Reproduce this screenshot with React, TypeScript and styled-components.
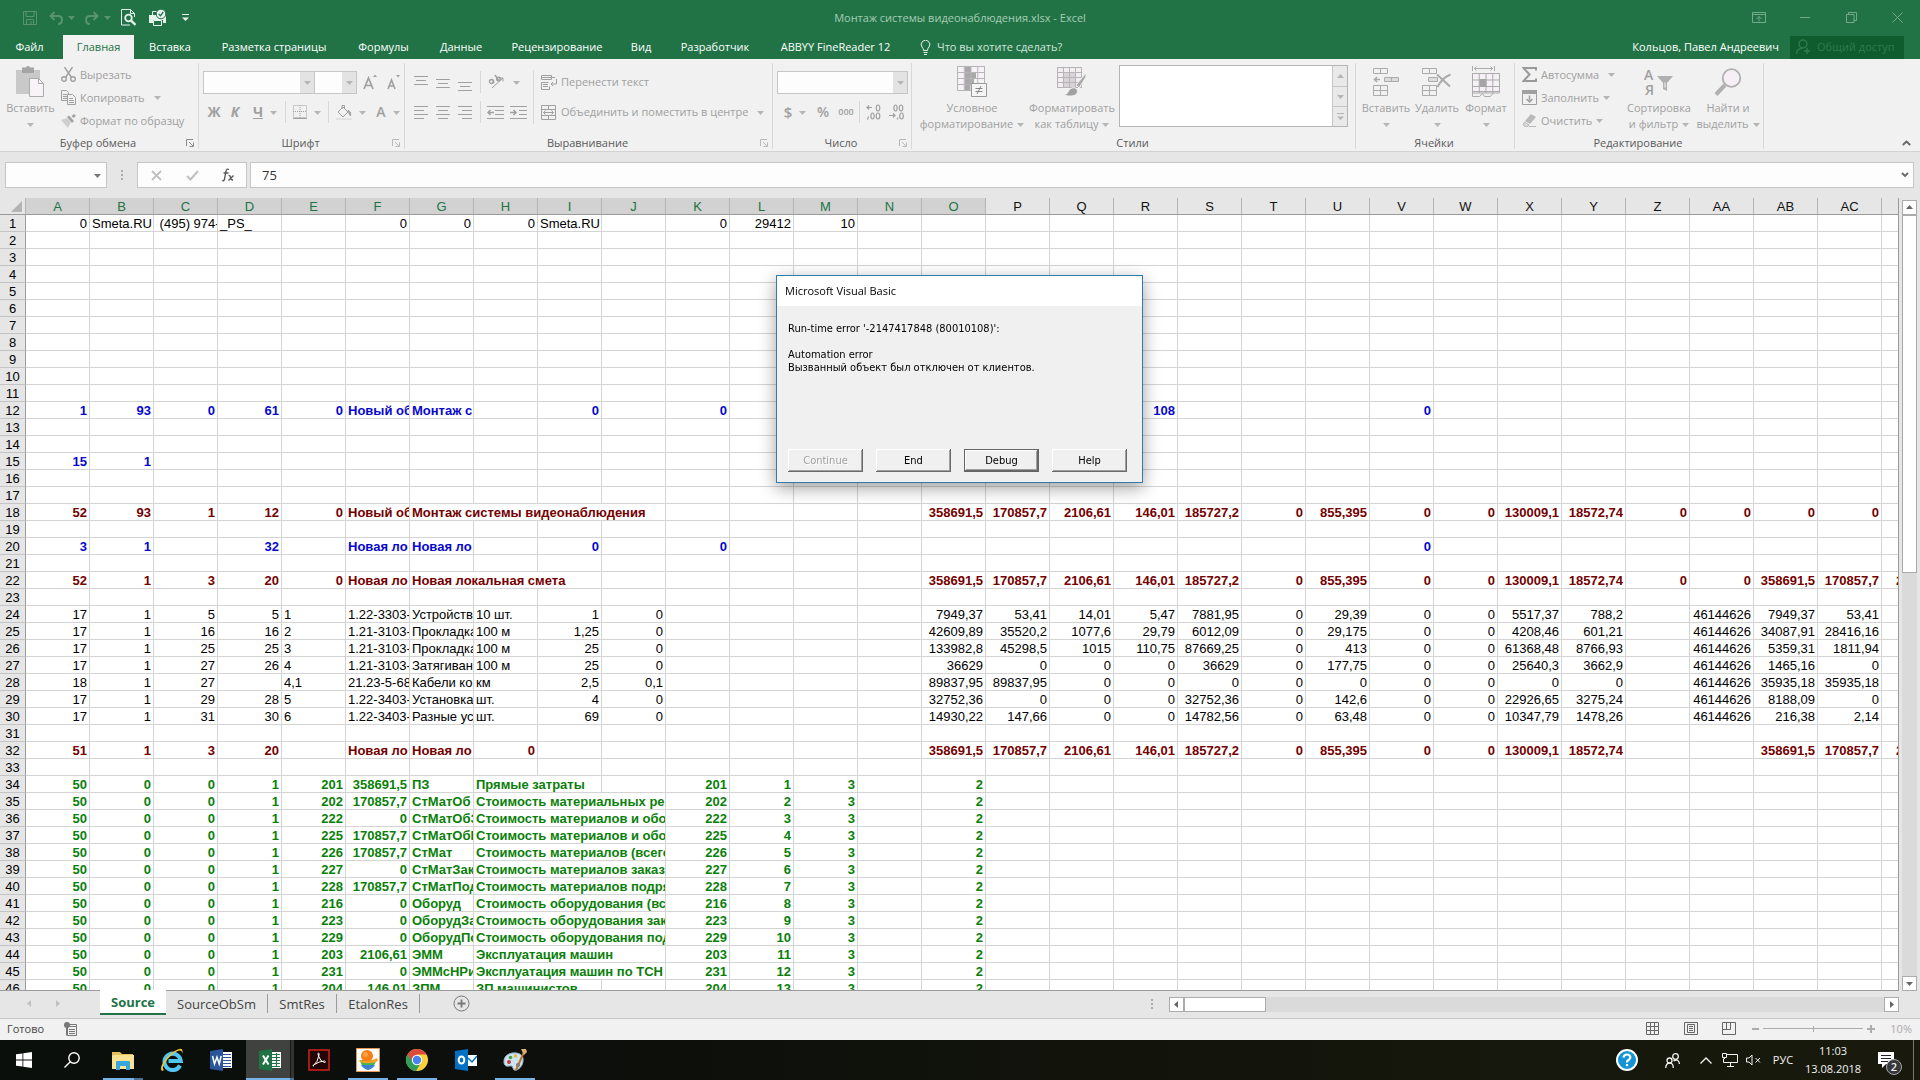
import React from "react";
import styled, { createGlobalStyle, css } from "styled-components";

const UI = `"Open Sans", "Noto Sans", sans-serif`;
const CELL = `"Liberation Sans", Arial, sans-serif`;
const DLG = `"DejaVu Sans Condensed", "DejaVu Sans", sans-serif`;
const GREEN = "#217346";
const OFF = "#a0a0a0";

const Global = createGlobalStyle`
  * { box-sizing: border-box; }
  body { margin: 0; overflow: hidden; background: #e6e6e6; }
  button, input, select { font: inherit; color: inherit; margin: 0; padding: 0; border: 0; background: none; border-radius: 0; outline: 0; }
  svg { display: block; flex: none; }
`;

const Window = styled.div`
  height: 100vh;
  display: flex;
  flex-direction: column;
  font: 11px/16px ${UI};
  color: #444;
  white-space: nowrap;
  overflow: hidden;
`;

/* ---------- title bar ---------- */
const TitleBar = styled.header`
  height: 35px;
  flex: none;
  display: grid;
  grid-template-columns: 1fr auto 1fr;
  align-items: center;
  background: ${GREEN};
`;
const QuickBar = styled.div`
  display: flex;
  align-items: center;
  padding-left: 18px;
`;
const QuickButton = styled.button<{ $w: number }>`
  width: ${(p) => p.$w}px;
  height: 28px;
  display: flex;
  align-items: center;
  justify-content: center;
  gap: 5px;
`;
const DocTitle = styled.h1`
  margin: 0;
  font: 11px/16px ${UI};
  color: #a6cdb5;
`;
const WindowButtons = styled.div`
  display: flex;
  justify-content: flex-end;
  height: 30px;
`;
const WindowButton = styled.button`
  width: 46px;
  display: flex;
  align-items: center;
  justify-content: center;
`;

/* ---------- ribbon tabs ---------- */
const TabBar = styled.nav`
  height: 24px;
  flex: none;
  display: flex;
  background: ${GREEN};
  color: #fff;
`;
const Tab = styled.button<{ $w: number; $active?: boolean; $file?: boolean }>`
  width: ${(p) => p.$w}px;
  ${(p) => p.$file && css`margin-right: 4px;`}
  text-align: center;
  ${(p) => p.$active && css`background: #f1f1f1; color: ${GREEN};`}
`;
const TellMe = styled.button`
  display: flex;
  align-items: center;
  gap: 6px;
  padding-left: 14px;
  color: #d3e5da;
`;
const Account = styled.div`
  margin-left: auto;
  padding-right: 16px;
  display: flex;
  align-items: center;
  gap: 11px;
`;
const Share = styled.button`
  width: 114px;
  height: 23px;
  padding: 0 6px;
  display: flex;
  align-items: center;
  gap: 6px;
  background: #0f5c2f;
  color: #2d7c4d;
`;

/* ---------- ribbon ---------- */
const Ribbon = styled.section`
  height: 93px;
  flex: none;
  display: flex;
  background: #f1f1f1;
  border-bottom: 1px solid #d2d2d2;
  color: ${OFF};
`;
const Group = styled.div<{ $w: number }>`
  width: ${(p) => p.$w}px;
  flex: none;
  margin: 4px 0 2px;
  border-right: 1px solid #d8d8d8;
  display: flex;
  flex-direction: column;
`;
const GroupBody = styled.div<{ $pad?: number }>`
  height: 74px;
  flex: none;
  display: flex;
  align-items: flex-start;
  padding-left: ${(p) => p.$pad ?? 0}px;
`;
const GroupFooter = styled.div`
  height: 12px;
  line-height: 12px;
  padding-right: 2px;
  display: grid;
  grid-template-columns: 10px 1fr 10px;
  align-items: center;
  text-align: center;
  color: #5a5a5a;
`;
const BigButton = styled.button<{ $w: number }>`
  width: ${(p) => p.$w}px;
  flex: none;
  display: flex;
  flex-direction: column;
  align-items: center;
  line-height: 16px;
`;
const BigIcon = styled.span`
  height: 37px;
  display: flex;
  align-items: center;
`;
const BigLine = styled.span`
  height: 16px;
  display: flex;
  align-items: center;
  gap: 4px;
`;
const Stack = styled.div<{ $w?: number }>`
  width: ${(p) => (p.$w ? p.$w + "px" : "auto")};
  height: 69px;
  display: grid;
  grid-template-rows: repeat(3, 23px);
`;
const Small = styled.button`
  display: flex;
  align-items: center;
  gap: 4px;
`;
const Far = styled.span`
  padding-left: 5px;
`;
const Rows = styled.div`
  display: grid;
  grid-template-rows: 24px 24px;
  row-gap: 6px;
  padding-top: 7px;
  align-content: start;
`;
const ToolRow = styled.div`
  display: flex;
  align-items: center;
`;
const Tool = styled.button<{ $w: number }>`
  width: ${(p) => p.$w}px;
  flex: none;
  height: 24px;
  display: flex;
  align-items: center;
  justify-content: center;
  gap: 7px;
`;
const Space = styled.span<{ $w: number }>`
  width: ${(p) => p.$w}px;
  flex: none;
`;
const Glyph = styled.span<{ $size?: number; $italic?: boolean; $line?: boolean; $bold?: boolean }>`
  font: ${(p) => (p.$italic ? "italic" : "normal")} ${(p) => (p.$bold ? 700 : 600)} ${(p) => p.$size ?? 14}px/20px ${UI};
  text-decoration: ${(p) => (p.$line ? "underline" : "none")};
`;
const Sep = styled.span<{ $tall?: boolean }>`
  width: 1px;
  flex: none;
  height: ${(p) => (p.$tall ? 54 : 22)}px;
  background: #d8d8d8;
`;
const TallSep = styled(Sep)`
  margin-top: 7px;
`;
const Combo = styled.span<{ $w: number }>`
  width: ${(p) => p.$w}px;
  height: 23px;
  display: flex;
  background: #fdfdfd;
  border: 1px solid #c6c6c6;
  & + & { margin-left: -1px; }
  select { flex: 1; min-width: 0; appearance: none; }
`;
const ComboArrow = styled.span`
  width: 14px;
  display: flex;
  align-items: center;
  justify-content: center;
  background: #e3e3e3;
`;
const Gallery = styled.div`
  width: 229px;
  height: 62px;
  margin: 2px 0 0 3px;
  display: flex;
  border: 1px solid #b4b4b4;
  background: #fff;
`;
const GalleryBar = styled.div`
  margin-left: auto;
  width: 15px;
  display: grid;
  grid-template-rows: repeat(3, 20px);
  background: #e9e9e9;
  border-left: 1px solid #c6c6c6;
  button { display: flex; align-items: center; justify-content: center; }
  button + button { border-top: 1px solid #c6c6c6; }
`;
const Collapse = styled.button`
  margin-left: auto;
  width: 28px;
  height: 24px;
  align-self: flex-end;
  padding-top: 4px;
  display: flex;
  justify-content: center;
`;

/* ---------- formula bar ---------- */
const FormulaBar = styled.section`
  height: 46px;
  flex: none;
  padding: 10px 6px 10px 5px;
  display: flex;
  background: #e6e6e6;
`;
const Box = styled.div<{ $w?: number }>`
  ${(p) => (p.$w ? css`width: ${p.$w}px;` : css`flex: 1;`)}
  display: flex;
  align-items: center;
  background: #fdfdfd;
  border: 1px solid #c6c6c6;
  input { flex: 1; min-width: 0; height: 22px; padding-left: 11px; font-size: 13px; color: #333; }
  button { width: 36px; height: 22px; display: flex; align-items: center; justify-content: center; }
`;
const Handle = styled.span`
  width: 30px;
  display: flex;
  align-items: center;
  justify-content: center;
`;
const BoxEnd = styled.button`
  && { width: 17px; }
`;

/* ---------- sheet ---------- */
const SheetArea = styled.main`
  flex: 1;
  min-height: 0;
  display: flex;
  background: #e6e6e6;
`;
const SheetView = styled.div`
  flex: 1;
  min-width: 0;
  overflow: hidden;
  border-right: 1px solid #9b9b9b;
  border-bottom: 1px solid #9b9b9b;
  background: #fff;
`;
const Table = styled.table`
  width: 1946px;
  table-layout: fixed;
  border-collapse: separate;
  border-spacing: 0;
  font: 13px/14px ${CELL};
  color: #000;
`;
const HeadCell = styled.th<{ $sel?: boolean }>`
  height: 17px;
  padding: 1px 0 0;
  font-weight: 400;
  border-right: 1px solid #b4b4b4;
  border-bottom: 1px solid #9b9b9b;
  background: ${(p) => (p.$sel ? "#d2d2d2" : "#e6e6e6")};
  color: ${(p) => (p.$sel ? GREEN : "#111")};
`;
const CornerMark = styled.span`
  display: flex;
  justify-content: flex-end;
  padding-right: 3px;
`;
const RowHead = styled.th`
  height: 17px;
  padding: 2px 0 0;
  font-weight: 400;
  text-align: center;
  background: #e6e6e6;
  border-right: 1px solid #9b9b9b;
  border-bottom: 1px solid #c4c4c4;
`;
const tones = { k: "#000", b: "#0808cf", r: "#740000", g: "#0a7f0a" } as const;
type Tone = keyof typeof tones;
const Cell = styled.td<{ $tone: Tone; $num?: boolean }>`
  height: 17px;
  padding: 2px 2px 0;
  overflow: hidden;
  white-space: pre;
  border-right: 1px solid #d4d4d4;
  border-bottom: 1px solid #d4d4d4;
  text-align: ${(p) => (p.$num ? "right" : "left")};
  color: ${(p) => tones[p.$tone]};
  font-weight: ${(p) => (p.$tone === "k" ? 400 : 700)};
`;
const VScroll = styled.div`
  width: 21px;
  padding: 2px 3px 0;
  display: flex;
  flex-direction: column;
`;
const ScrollButton = styled.button`
  width: 15px;
  height: 15px;
  flex: none;
  display: flex;
  align-items: center;
  justify-content: center;
  background: #fff;
  border: 1px solid #ababab;
`;
const Track = styled.div<{ $row?: boolean }>`
  flex: 1;
  display: flex;
  flex-direction: ${(p) => (p.$row ? "row" : "column")};
  background: #dadada;
`;
const Thumb = styled.div<{ $row?: boolean }>`
  ${(p) => (p.$row ? css`width: 82px;` : css`height: 47%;`)}
  background: #fff;
  border: 1px solid #ababab;
`;

const SheetBar = styled.section`
  height: 27px;
  flex: none;
  display: flex;
  background: #e6e6e6;
`;
const SheetNav = styled.div`
  width: 100px;
  padding: 0 15px;
  display: flex;
  button { width: 28px; height: 25px; display: flex; align-items: center; justify-content: center; }
`;
const SheetTab = styled.button<{ $w: number; $active?: boolean }>`
  width: ${(p) => p.$w}px;
  font-size: 13px;
  line-height: 18px;
  height: 19px;
  margin-top: 3px;
  border-right: 1px solid #9b9b9b;
  ${(p) =>
    p.$active &&
    css`
      height: 25px;
      margin-top: -1px;
      background: #fff;
      color: ${GREEN};
      font-weight: 700;
      border-right: 0;
      border-bottom: 2px solid ${GREEN};
    `}
`;
const AddSheet = styled.button`
  width: 82px;
  height: 25px;
  display: flex;
  align-items: center;
  justify-content: center;
`;
const HScroll = styled.div`
  width: 764px;
  height: 15px;
  margin: 6px 21px 0 auto;
  display: flex;
`;
const HGrip = styled.span`
  width: 34px;
  display: flex;
  align-items: center;
  justify-content: center;
`;

const StatusBar = styled.footer`
  height: 22px;
  flex: none;
  padding: 0 8px 2px 7px;
  display: flex;
  align-items: center;
  gap: 20px;
  background: #f1f1f1;
  border-top: 1px solid #c6c6c6;
`;
const ViewButtons = styled.div`
  margin-left: auto;
  display: flex;
  gap: 24px;
  button { width: 14px; }
`;
const ZoomBox = styled.label`
  display: flex;
  align-items: center;
  gap: 4px;
  color: #ababab;
  margin-left: -4px;
`;
const ZoomRange = styled.input`
  appearance: none;
  width: 100px;
  height: 12px;
  background:
    linear-gradient(#ababab, #ababab) center / 1px 6px no-repeat,
    linear-gradient(#ababab, #ababab) center / 100% 1px no-repeat;
  &::-webkit-slider-thumb { appearance: none; width: 1px; height: 6px; background: #ababab; }
`;
const ZoomValue = styled.output`
  width: 33px;
  text-align: right;
`;

/* ---------- dialog ---------- */
const Dialog = styled.div`
  position: fixed;
  left: 776px;
  top: 275px;
  width: 367px;
  height: 208px;
  display: flex;
  flex-direction: column;
  background: #f0f0f0;
  border: 1px solid #3379ac;
  box-shadow: 0 5px 16px rgba(0, 0, 0, 0.38);
  color: #000;
  font: 11px/13px ${DLG};
`;
const DialogTitle = styled.h2`
  margin: 0;
  height: 30px;
  padding-left: 8px;
  font: 11px/30px ${UI};
  background: #fff;
`;
const DialogText = styled.p`
  margin: 0;
  flex: 1;
  padding: 16px 11px 0;
  white-space: pre-line;
`;
const DialogButtons = styled.div`
  display: flex;
  gap: 13px;
  padding: 0 11px 10px;
`;
const DialogButton = styled.button<{ $primary?: boolean }>`
  width: 75px;
  height: 23px;
  background: #f0f0f0;
  box-shadow: inset -1px -1px #696969, inset 1px 1px #fff, inset -2px -2px #a0a0a0;
  ${(p) => p.$primary && css`
    border: 1px solid #646464;
  `}
  &:disabled { color: #a0a0a0; text-shadow: 1px 1px #fff; }
`;

/* ---------- taskbar ---------- */
const Taskbar = styled.footer`
  height: 40px;
  flex: none;
  display: flex;
  background: linear-gradient(90deg, #0a0f0b, #0d0f0b 35%, #14160c 70%, #191a0d);
  color: #f2f2f2;
`;
const TaskButton = styled.button<{ $run?: boolean; $active?: boolean; $split?: boolean; $gap?: number }>`
  width: 48px;
  margin-right: ${(p) => p.$gap ?? 1}px;
  display: flex;
  align-items: center;
  justify-content: center;
  ${(p) => p.$run && css`
    background: linear-gradient(#76b3e6, #76b3e6) center bottom / 40px 2px no-repeat;
  `}
  ${(p) => p.$split && css`
    background:
      linear-gradient(#76b3e6, #76b3e6) 4px bottom / 31px 2px no-repeat,
      linear-gradient(#4b7292, #4b7292) 35px bottom / 9px 2px no-repeat;
  `}
  ${(p) => p.$active && css`
    background:
      linear-gradient(#76b3e6, #76b3e6) left bottom / 44px 2px no-repeat,
      linear-gradient(#4b7292, #4b7292) right bottom / 4px 2px no-repeat,
      linear-gradient(90deg, #3f423f 44px, #151815 44px, #151815 45px, #323532 45px);
  `}
`;
const Tray = styled.div`
  margin-left: auto;
  display: flex;
  padding-right: 3px;
`;
const TrayButton = styled.button<{ $w: number }>`
  width: ${(p) => p.$w}px;
  display: flex;
  align-items: center;
  justify-content: center;
`;
const Clock = styled.time`
  width: 64px;
  padding-top: 2px;
  display: flex;
  flex-direction: column;
  align-items: center;
  line-height: 18px;
`;
const BadgeHost = styled.span`
  position: relative;
`;
const Badge = styled.span`
  position: absolute;
  left: 8px;
  top: 7px;
  width: 16px;
  height: 16px;
  border-radius: 8px;
  border: 1px solid #a8a8a8;
  background: #35373a;
  font: 600 11px/14px ${UI};
`;
const ShowDesktop = styled.button`
  width: 4px;
  margin-left: 6px;
  border-left: 1px solid #777;
`;

/* ---------- drawings ---------- */
const Ico = ({ w = 16, h = 16, s = OFF, sw = 1, children }: any) => (
  <svg width={w} height={h} viewBox={`0 0 ${w} ${h}`} fill="none" stroke={s} strokeWidth={sw} aria-hidden="true">
    {children}
  </svg>
);
const Arrow = ({ c = "#b5b5b5", dir = "down" }: { c?: string; dir?: "down" | "up" | "left" | "right" }) => {
  const d = { down: "M0 2h7L3.500 6z", up: "M0 5h7L3.500 1z", left: "M5 0v7L1 3.500z", right: "M2 0v7l4-3.500z" }[dir];
  return (
    <Ico w={7} h={7} s="none"><path d={d} fill={c} /></Ico>
  );
};
const Launch = ({ c = "#b9b9b9" }) => (
  <Ico w={8} h={8} s={c}><path d="M.5 7V.5H7M3 3l4 4M7.500 3.500v4h-4" /></Ico>
);
const Lines = ({ rows }: { rows: [number, number][] }) => (
  <Ico w={14} h={13}><path d={rows.map(([x, l], i) => `M${x} ${i * 4 + 0.5}h${l}`).join("")} /></Ico>
);
const Grid = ({ x, y, cols, rows, cw, ch }: any) => (
  <path
    d={
      Array.from({ length: cols + 1 }, (_, i) => `M${x + i * cw} ${y}v${rows * ch}`).join("") +
      Array.from({ length: rows + 1 }, (_, i) => `M${x} ${y + i * ch}h${cols * cw}`).join("")
    }
  />
);

/* ---------- sheet data ---------- */
const COLS = [..."ABCDEFGHIJKLMNOPQRSTUVWXYZ"].concat(["AA", "AB", "AC", "AD"]);
type Item = [string, string, number?];
type RowDef = { tone: Tone; cells: Item[] };

const from = (start: string, values: string): Item[] => {
  const at = COLS.indexOf(start);
  return values
    .split(" ")
    .map((v, i): Item => [COLS[at + i], v === "-" ? "" : v])
    .filter((c) => c[1] !== "");
};

const data: Record<number, RowDef> = {
  1: {
    tone: "k",
    cells: [["A", "0"], ["B", "Smeta.RU"], ["C", " (495) 974-"], ["D", "_PS_"], ...from("F", "0 0 0"), ["I", "Smeta.RU"], ...from("K", "0 29412 10")],
  },
  12: { tone: "b", cells: [...from("A", "1 93 0 61 0"), ["F", "Новый об"], ["G", "Монтаж с"], ["I", "0"], ["K", "0"], ["R", "108"], ["V", "0"]] },
  15: { tone: "b", cells: from("A", "15 1") },
  18: {
    tone: "r",
    cells: [...from("A", "52 93 1 12 0"), ["F", "Новый об"], ["G", "Монтаж системы видеонаблюдения", 4],
      ...from("O", "358691,5 170857,7 2106,61 146,01 185727,2 0 855,395 0 0 130009,1 18572,74 0 0 0 0")],
  },
  20: { tone: "b", cells: [...from("A", "3 1 - 32"), ["F", "Новая ло"], ["G", "Новая ло"], ["I", "0"], ["K", "0"], ["V", "0"]] },
  22: {
    tone: "r",
    cells: [...from("A", "52 1 3 20 0"), ["F", "Новая ло"], ["G", "Новая локальная смета", 3],
      ...from("O", "358691,5 170857,7 2106,61 146,01 185727,2 0 855,395 0 0 130009,1 18572,74 0 0 358691,5 170857,7 2106,61")],
  },
  32: {
    tone: "r",
    cells: [...from("A", "51 1 3 20"), ["F", "Новая ло"], ["G", "Новая ло"], ["H", "0"],
      ...from("O", "358691,5 170857,7 2106,61 146,01 185727,2 0 855,395 0 0 130009,1 18572,74 - - 358691,5 170857,7 2106,61")],
  },
};

const works: [string, string, string, string, string, string, string][] = [
  ["17 1 5 5", "1", "1.22-3303-", "Устройств", "10 шт.", "1 0", "7949,37 53,41 14,01 5,47 7881,95 0 29,39 0 0 5517,37 788,2 - 46144626 7949,37 53,41"],
  ["17 1 16 16", "2", "1.21-3103-", "Прокладка", "100 м", "1,25 0", "42609,89 35520,2 1077,6 29,79 6012,09 0 29,175 0 0 4208,46 601,21 - 46144626 34087,91 28416,16"],
  ["17 1 25 25", "3", "1.21-3103-", "Прокладка", "100 м", "25 0", "133982,8 45298,5 1015 110,75 87669,25 0 413 0 0 61368,48 8766,93 - 46144626 5359,31 1811,94"],
  ["17 1 27 26", "4", "1.21-3103-", "Затягиван", "100 м", "25 0", "36629 0 0 0 36629 0 177,75 0 0 25640,3 3662,9 - 46144626 1465,16 0"],
  ["18 1 27", "4,1", "21.23-5-68", "Кабели ко", "км", "2,5 0,1", "89837,95 89837,95 0 0 0 0 0 0 0 0 0 - 46144626 35935,18 35935,18"],
  ["17 1 29 28", "5", "1.22-3403-", "Установка", "шт.", "4 0", "32752,36 0 0 0 32752,36 0 142,6 0 0 22926,65 3275,24 - 46144626 8188,09 0"],
  ["17 1 31 30", "6", "1.22-3403-", "Разные ус", "шт.", "69 0", "14930,22 147,66 0 0 14782,56 0 63,48 0 0 10347,79 1478,26 - 46144626 216,38 2,14"],
];
works.forEach((w, i) => {
  data[24 + i] = {
    tone: "k",
    cells: [...from("A", w[0]), ["E", w[1]], ["F", w[2]], ["G", w[3]], ["H", w[4]], ...from("I", w[5]), ...from("O", w[6])],
  };
});

const totals: [string, string, string, string, number][] = [
  ["201", "358691,5", "ПЗ", "Прямые затраты", 2],
  ["202", "170857,7", "СтМатОб", "Стоимость материальных ре", 3],
  ["222", "0", "СтМатОбЗ", "Стоимость материалов и обо", 3],
  ["225", "170857,7", "СтМатОбП", "Стоимость материалов и обо", 3],
  ["226", "170857,7", "СтМат", "Стоимость материалов (всего", 3],
  ["227", "0", "СтМатЗак", "Стоимость материалов заказ", 3],
  ["228", "170857,7", "СтМатПод", "Стоимость материалов подря", 3],
  ["216", "0", "Оборуд", "Стоимость оборудования (вс", 3],
  ["223", "0", "ОборудЗа", "Стоимость оборудования зак", 3],
  ["229", "0", "ОборудПо", "Стоимость оборудования под", 3],
  ["203", "2106,61", "ЭММ", "Эксплуатация машин", 3],
  ["231", "0", "ЭММсНРи", "Эксплуатация машин по ТСН", 3],
  ["204", "146,01", "ЗПМ", "ЗП машинистов", 2],
];
totals.forEach((t, i) => {
  data[34 + i] = {
    tone: "g",
    cells: [...from("A", "50 0 0 1"), ["E", t[0]], ["F", t[1]], ["G", t[2]], ["H", t[3], t[4]],
      ...from("K", `${t[0]} ${i + 1} 3`), ["O", "2"]],
  };
});

const isNumber = (col: string, v: string) => /^[\d,]+$/.test(v) && !(col === "E" && !/^(0|2\d\d)$/.test(v));

const SheetRow = ({ n }: { n: number }) => {
  const def = data[n];
  const out: React.ReactNode[] = [];
  for (let c = 0; c < COLS.length; ) {
    const item = def?.cells.find((x) => x[0] === COLS[c]);
    const span = item?.[2] ?? 1;
    out.push(
      <Cell key={c} colSpan={span} $tone={def?.tone ?? "k"} $num={!!item && isNumber(COLS[c], item[1])}>
        {item?.[1]}
      </Cell>
    );
    c += span;
  }
  return (
    <tr>
      <RowHead scope="row">{n}</RowHead>
      {out}
    </tr>
  );
};

const G2 = "#58956f";
const LG = "#e7f2ec";

const RibbonTabs: [string, number][] = [
  ["Вставка", 72], ["Разметка страницы", 136], ["Формулы", 83], ["Данные", 72], ["Рецензирование", 120],
  ["Вид", 48], ["Разработчик", 100], ["ABBYY FineReader 12", 141],
];

export default function App() {
  return (
    <Window>
      <Global />
      <TitleBar>
        <QuickBar>
          <QuickButton $w={23} aria-label="Сохранить">
            <Ico w={14} h={14} s={G2}><path d="M.5.5h13v13H.5zM3 .5v5h8v-5M3.500 13.500v-5h7v5M8 10v3" /></Ico>
          </QuickButton>
          <QuickButton $w={42} aria-label="Отменить">
            <Ico w={14} h={14} s={G2} sw={2}><path d="M1.500 5H9q4 0 4 4t-4 4M5.500 1l-4 4 4 4" /></Ico>
            <Arrow c={G2} />
          </QuickButton>
          <QuickButton $w={30} aria-label="Вернуть">
            <Ico w={14} h={14} s={G2} sw={2}><path d="M12.500 5H5q-4 0-4 4t4 4M8.500 1l4 4-4 4" /></Ico>
            <Arrow c={G2} />
          </QuickButton>
          <QuickButton $w={30} aria-label="Просмотр">
            <Ico w={15} h={17} s={LG}><path d="M9.500.5h-9v15.500H9M9.500.5v4h4M9.500.5l4 4V8" /><circle cx="7.500" cy="9" r="3.300" strokeWidth="1.800" /><path d="M10 11.500l4.500 4.500" strokeWidth="2.400" /></Ico>
          </QuickButton>
          <QuickButton $w={28} aria-label="Печать">
            <Ico w={17} h={17} s="none"><path d="M0 6h17v8h-3v-3H4v3H0z" fill={LG} /><path d="M4.500 11.500h8v5h-8z" fill={GREEN} stroke={LG} /><path d="M3.500 6V2.500H8" stroke={LG} /><circle cx="12" cy="5" r="4.800" fill={LG} stroke={GREEN} /><path d="M9.800 5l1.700 1.800L14.200 3" stroke={GREEN} strokeWidth="1.300" /></Ico>
          </QuickButton>
          <QuickButton $w={28} aria-label="Настройка панели">
            <Ico w={7} h={8} s={LG}><path d="M0 .5h7" /><path d="M0 3.500h7L3.500 7z" fill={LG} stroke="none" /></Ico>
          </QuickButton>
        </QuickBar>
        <DocTitle>Монтаж системы видеонаблюдения.xlsx - Excel</DocTitle>
        <WindowButtons>
          <WindowButton aria-label="Параметры ленты"><Ico w={14} h={11} s="#74a98b"><path d="M.5.5h13v10H.5zM.5 2.500h13M7 9.500v-5M4.500 7L7 4.500 9.500 7" /></Ico></WindowButton>
          <WindowButton aria-label="Свернуть"><Ico w={10} h={11} s="#74a98b"><path d="M0 5.500h10" /></Ico></WindowButton>
          <WindowButton aria-label="Восстановить"><Ico w={11} h={11} s="#74a98b"><path d="M.5 2.500h7.500v8H.5zM2.500 2.500v-2h8v8H8" /></Ico></WindowButton>
          <WindowButton aria-label="Закрыть"><Ico w={11} h={11} s="#74a98b"><path d="M.5.5l10 10M10.500.5l-10 10" /></Ico></WindowButton>
        </WindowButtons>
      </TitleBar>

      <TabBar>
        <Tab $w={59} $file>Файл</Tab>
        <Tab $w={71} $active>Главная</Tab>
        {RibbonTabs.map(([t, w]) => <Tab key={t} $w={w}>{t}</Tab>)}
        <TellMe>
          <Ico w={11} h={15} s="#e7f2ec"><path d="M3.500 10.500Q3.500 8.500 2 7a4.300 4.300 0 1 1 7 0q-1.500 1.500-1.500 3.500zM3.500 12.500h4M4 14.500h3" /></Ico>
          Что вы хотите сделать?
        </TellMe>
        <Account>
          <span>Кольцов, Павел Андреевич</span>
          <Share>
            <Ico w={15} h={16} s="#2d7c4d" sw={1.500}><circle cx="7" cy="5" r="4" /><path d="M.7 15q0-5 5.300-6M11 9v6M8 12h6" /></Ico>
            Общий доступ
          </Share>
        </Account>
      </TabBar>

      <Ribbon>
        <Group $w={199}>
          <GroupBody>
            <BigButton $w={61}>
              <BigIcon>
                <Ico w={29} h={31} s="none"><path d="M0 4h24v24H0z" fill="#c9c9c9" /><path d="M6 1.500h3.500q2.500-3 5 0H18V7H6z" fill="#a5a5a5" /><path d="M13.500 12.500h9l5 5v13h-14z" fill="#f7f3f7" stroke="#ababab" /><path d="M22.500 12.500v5h5" stroke="#ababab" /></Ico>
              </BigIcon>
              <BigLine>Вставить</BigLine>
              <BigLine><Arrow /></BigLine>
            </BigButton>
            <Stack>
              <Small>
                <Ico w={15} h={15} sw={1.400}><circle cx="3" cy="12" r="2.300" /><circle cx="12" cy="12" r="2.300" /><path d="M3.500 0l7 10.500M11.500 0l-7 10.500" /></Ico>
                Вырезать
              </Small>
              <Small>
                <Ico w={15} h={15}><path d="M.5.5h5l2 2v8h-7zM2 4.500h4M2 6.500h4M2 8.500h4" /><path d="M6.500 4.500h5l3 3v7h-8z" fill="#f1f1f1" /><path d="M8 8.500h4M8 10.500h5M8 12.500h5" /></Ico>
                Копировать
                <Far><Arrow /></Far>
              </Small>
              <Small>
                <Ico w={15} h={14} s="none"><path d="M0 6l6-2 4 4-3 6z" fill="#cfcfcf" /><path d="M6 3l2-1.500L13 7l-2 2zM10.500 2L13 0l2 2-2.500 2z" fill="#a3a3a3" /></Ico>
                Формат по образцу
              </Small>
            </Stack>
          </GroupBody>
          <GroupFooter><i /><span>Буфер обмена</span><Launch c="#8a8a8a" /></GroupFooter>
        </Group>

        <Group $w={206}>
          <GroupBody $pad={4}>
            <Rows>
              <ToolRow>
                <Combo $w={112}><select aria-label="Шрифт"><option></option></select><ComboArrow><Arrow /></ComboArrow></Combo>
                <Combo $w={43}><select aria-label="Размер"><option></option></select><ComboArrow><Arrow /></ComboArrow></Combo>
                <Tool $w={26} aria-label="Увеличить размер"><Ico w={14} h={16} s="none"><path d="M10 3l2-2.500L14 3z" fill={OFF} /><path d="M1 15L5.500 4 10 15M2.500 11.500h6" stroke={OFF} strokeWidth="1.700" /></Ico></Tool>
                <Tool $w={20} aria-label="Уменьшить размер"><Ico w={13} h={16} s="none"><path d="M9 1h4l-2 2.500z" fill={OFF} /><path d="M1 15l3.500-9L8 15M2.200 12h4.600" stroke={OFF} strokeWidth="1.600" /></Ico></Tool>
              </ToolRow>
              <ToolRow>
                <Tool $w={22}><Glyph $bold>Ж</Glyph></Tool>
                <Tool $w={20}><Glyph $italic $bold>К</Glyph></Tool>
                <Tool $w={40}><Glyph $line $bold>Ч</Glyph><Arrow /></Tool>
                <Sep />
                <Tool $w={42} aria-label="Границы">
                  <Ico w={14} h={14}><path d="M.5.5h13v12H.5zM7 0v13M0 6.500h14" strokeDasharray="1 1" /><path d="M0 13.500h14" /></Ico>
                  <Arrow />
                </Tool>
                <Sep />
                <Tool $w={44} aria-label="Цвет заливки">
                  <Ico w={16} h={15}><path d="M2 7l5-5 5 5-5 5zM6 4V.5h2.500V4" /><path d="M12 5q4 2 2.500 6Q13 9 12 5z" fill={OFF} /><path d="M0 14h16" stroke="#e2e2e2" strokeWidth="2" /></Ico>
                  <Arrow />
                </Tool>
                <Tool $w={30}><Glyph>А</Glyph><Arrow /></Tool>
              </ToolRow>
            </Rows>
          </GroupBody>
          <GroupFooter><i /><span>Шрифт</span><Launch /></GroupFooter>
        </Group>

        <Group $w={368}>
          <GroupBody $pad={5}>
            <Rows>
              <ToolRow>
                <Tool $w={22} aria-label="По верхнему краю"><Ico w={14} h={18}><path d="M0 3.500h14M2 7.500h10M0 11.500h14" /></Ico></Tool>
                <Tool $w={22} aria-label="Посередине"><Ico w={14} h={18}><path d="M0 6.500h14M2 10.500h10M0 14.500h14" /></Ico></Tool>
                <Tool $w={22} aria-label="По нижнему краю"><Ico w={14} h={18}><path d="M0 9.500h14M2 13.500h10M0 17.500h14" /></Ico></Tool>
                <Space $w={4} />
                <Sep />
                <Tool $w={46} aria-label="Ориентация">
                  <Ico w={18} h={16} s={OFF}><path d="M4 14L15 4M11.500 4H15v3.500" /><circle cx="3.500" cy="7.500" r="2" strokeWidth="1.400" /><path d="M6 9L4 5M7 1l4 6" strokeWidth="1.400" /><circle cx="10.500" cy="5" r="1.800" strokeWidth="1.400" /></Ico>
                  <Arrow />
                </Tool>
              </ToolRow>
              <ToolRow>
                <Tool $w={22} aria-label="По левому краю"><Lines rows={[[0, 14], [0, 10], [0, 14], [0, 10]]} /></Tool>
                <Tool $w={22} aria-label="По центру"><Lines rows={[[0, 14], [2, 10], [0, 14], [2, 10]]} /></Tool>
                <Tool $w={22} aria-label="По правому краю"><Lines rows={[[0, 14], [4, 10], [0, 14], [4, 10]]} /></Tool>
                <Space $w={4} />
                <Sep />
                <Tool $w={28} aria-label="Уменьшить отступ"><Ico w={17} h={13}><path d="M0 .5h17M8 4.500h9M8 8.500h9M0 12.500h17" /><path d="M1 6.500h6M3.500 4L1 6.500 3.500 9" strokeWidth="1.500" /></Ico></Tool>
                <Tool $w={18} aria-label="Увеличить отступ"><Ico w={17} h={13}><path d="M0 .5h17M9 4.500h8M9 8.500h8M0 12.500h17" /><path d="M0 6.500h6M3.500 4L6 6.500 3.500 9" strokeWidth="1.500" /></Ico></Tool>
              </ToolRow>
            </Rows>
            <Space $w={6} />
            <TallSep $tall />
            <Space $w={7} />
            <Rows>
              <Small>
                <Ico w={16} h={15}><path d="M.5.5h10v4H.5zM.5 7.500h7M.5 7.500v7h8v-3M2 9.500h5M2 11.500h5M0 2.500h14v0M15.500 4v5H10M12 7l-2 2 2 2" /></Ico>
                Перенести текст
              </Small>
              <Small>
                <Ico w={16} h={15}><path d="M.5.5h14v14H.5zM.5 4.500h14M.5 10.500h14M7.500.5v4M7.500 10.500v4M2.500 7.500h10M4.500 5.500l-2 2 2 2M10.500 5.500l2 2-2 2" /></Ico>
                Объединить и поместить в центре
                <Far><Arrow /></Far>
              </Small>
            </Rows>
          </GroupBody>
          <GroupFooter><i /><span>Выравнивание</span><Launch /></GroupFooter>
        </Group>

        <Group $w={139}>
          <GroupBody $pad={4}>
            <Rows>
              <ToolRow><Combo $w={131}><select aria-label="Числовой формат"><option></option></select><ComboArrow><Arrow /></ComboArrow></Combo></ToolRow>
              <ToolRow>
                <Tool $w={36}><Glyph $size={15}>$</Glyph><Arrow /></Tool>
                <Tool $w={20}><Glyph $size={14}>%</Glyph></Tool>
                <Tool $w={26}><Glyph $size={9}>000</Glyph></Tool>
                <Sep />
                <Tool $w={28} aria-label="Увеличить разрядность">
                  <Ico w={16} h={16} sw={1.200}><path d="M1 3.500h5M3 1.500l-2 2 2 2M2.500 12.500l-1 3" /><ellipse cx="12" cy="4" rx="1.800" ry="3" /><ellipse cx="6.500" cy="12" rx="1.600" ry="3" /><ellipse cx="12" cy="12" rx="1.800" ry="3" /></Ico>
                </Tool>
                <Tool $w={18} aria-label="Уменьшить разрядность">
                  <Ico w={16} h={16} sw={1.200}><path d="M0 11.500h6M4 9.500l2 2-2 2M9 13.500l-1 2" /><ellipse cx="6.500" cy="4" rx="1.600" ry="3" /><ellipse cx="12" cy="4" rx="1.800" ry="3" /><ellipse cx="12.500" cy="12" rx="1.800" ry="3" /></Ico>
                </Tool>
              </ToolRow>
            </Rows>
          </GroupBody>
          <GroupFooter><i /><span>Число</span><Launch /></GroupFooter>
        </Group>

        <Group $w={444}>
          <GroupBody $pad={4}>
            <BigButton $w={112}>
              <BigIcon>
                <Ico w={30} h={31} s="#b5b5b5"><path d="M.5.5h27v24H.5z" fill="#f7f2f7" /><path d="M8 1h6v6H8zM8 7h11v6H8zM8 13h9v6H8zM8 19h5v6H8z" fill="#a9a9a9" stroke="none" /><Grid x={0.5} y={0.5} cols={4} rows={4} cw={6.75} ch={6} /><path d="M14.500 17.500h15v13h-15z" fill="#f5f5f5" stroke="#999" /><path d="M18.500 22.500h7M18.500 25.500h7M24 20l-4 8" stroke="#888" /></Ico>
              </BigIcon>
              <BigLine>Условное</BigLine>
              <BigLine>форматирование<Arrow /></BigLine>
            </BigButton>
            <BigButton $w={88}>
              <BigIcon>
                <Ico w={30} h={29} s="#b5b5b5"><path d="M.5.5h24v20H.5z" fill="#f1edf1" /><path d="M7 6h12v14H7z" fill="#d8d3d8" stroke="none" /><Grid x={0.5} y={0.5} cols={4} rows={4} cw={6} ch={5} /><path d="M29 6L19 18l3 3 7-11z" fill="#ababab" stroke="#f1f1f1" /><path d="M7 28q4-1 5-5 4-4 8-1 2 6-5 7-4 .5-8-1z" fill="#a0a0a0" stroke="#f1f1f1" /></Ico>
              </BigIcon>
              <BigLine>Форматировать</BigLine>
              <BigLine>как таблицу<Arrow /></BigLine>
            </BigButton>
            <Gallery>
              <GalleryBar>
                <button aria-label="Вверх"><Arrow dir="up" /></button>
                <button aria-label="Вниз"><Arrow /></button>
                <button aria-label="Ещё"><Ico w={7} h={8} s="#b5b5b5"><path d="M0 .5h7" /><path d="M0 3.500h7L3.500 7z" fill="#b5b5b5" stroke="none" /></Ico></button>
              </GalleryBar>
            </Gallery>
          </GroupBody>
          <GroupFooter><i /><span>Стили</span></GroupFooter>
        </Group>

        <Group $w={159}>
          <GroupBody $pad={5}>
            <BigButton $w={50}>
              <BigIcon>
                <Ico w={26} h={28} s="#ababab"><path d="M.5.5h14v5H.5zM7.500.5v5M.5 17.500h14v10H.5zM7.500 17.500v10M.5 22.500h14M11.500 9.500h14v4h-14z" /><path d="M12 10h13v3H12z" fill="#dcdcdc" stroke="none" /><path d="M18.500 9v5" /><path d="M1.500 11.500H7M4 9l-2.500 2.500L4 14" strokeWidth="1.600" /></Ico>
              </BigIcon>
              <BigLine>Вставить</BigLine>
              <BigLine><Arrow /></BigLine>
            </BigButton>
            <BigButton $w={52}>
              <BigIcon>
                <Ico w={30} h={28} s="#ababab"><path d="M.5.5h14v5H.5zM7.500.5v5M.5 17.500h14v10H.5zM7.500 17.500v10M.5 22.500h14M6.500 9.500h9v4h-9z" /><path d="M7 10h8v3H7z" fill="#dcdcdc" stroke="none" /><path d="M15 6.500l13 12M28.500 6.500Q20 10 15.500 19" strokeWidth="2" /></Ico>
              </BigIcon>
              <BigLine>Удалить</BigLine>
              <BigLine><Arrow /></BigLine>
            </BigButton>
            <BigButton $w={46}>
              <BigIcon>
                <Ico w={28} h={31} s="#ababab"><path d="M.5 0v5M22.500 0v5M2 2.500h19M4.500.5l-2 2 2 2M18.500.5l2 2-2 2" /><path d="M.5 7.500h27v18H.5z" fill="#f5f0f5" /><Grid x={0.5} y={7.5} cols={4} rows={3} cw={6.75} ch={6.5} /><path d="M7.500 13h7v8h-7z" fill="#a5a5a5" stroke="none" /><path d="M.5 27v3.500h7l3-3 2 3h6l3-4" /></Ico>
              </BigIcon>
              <BigLine>Формат</BigLine>
              <BigLine><Arrow /></BigLine>
            </BigButton>
          </GroupBody>
          <GroupFooter><i /><span>Ячейки</span></GroupFooter>
        </Group>

        <Group $w={249}>
          <GroupBody $pad={7}>
            <Stack $w={99}>
              <Small>
                <Ico w={15} h={15} s="#999" sw={2}><path d="M14 3.500V1H1.500l6 6.500-6 6.500H14v-2.500" /></Ico>
                Автосумма
                <Far><Arrow /></Far>
              </Small>
              <Small>
                <Ico w={15} h={15}><path d="M.5.5h14v14H.5z" /><path d="M0 0h15v4H0z" fill={OFF} stroke="none" /><path d="M7.500 5.500v6M4.500 9l3 3 3-3" strokeWidth="1.500" /></Ico>
                Заполнить
                <Arrow />
              </Small>
              <Small>
                <Ico w={15} h={13} s="none"><path d="M3 7l6-7 5 3-6 7z" fill="#b9b9b9" /><path d="M2.500 8l4.500 3-1 1.500H3L1 11z" fill="#dadada" stroke="#b9b9b9" /><path d="M7 12.500h7" stroke="#b9b9b9" /></Ico>
                Очистить
                <Arrow />
              </Small>
            </Stack>
            <BigButton $w={76}>
              <BigIcon>
                <Ico w={30} h={28} s="none"><text x="0" y="12" fill={OFF} fontFamily="Open Sans" fontWeight="600" fontSize="14">А</text><text x="1" y="27" fill={OFF} fontFamily="Open Sans" fontWeight="600" fontSize="14">Я</text><path d="M13 8h16l-6 7v8l-4-2v-6z" fill="#b0b0b0" /><path d="M21 14.500v5" stroke="#f5f5f5" /></Ico>
              </BigIcon>
              <BigLine>Сортировка</BigLine>
              <BigLine>и фильтр<Arrow /></BigLine>
            </BigButton>
            <BigButton $w={62}>
              <BigIcon>
                <Ico w={28} h={28} s="#b0b0b0"><circle cx="17.500" cy="10" r="8.800" fill="#f6f0f6" strokeWidth="1.800" /><path d="M11 17L2 26.500" strokeWidth="4" /></Ico>
              </BigIcon>
              <BigLine>Найти и</BigLine>
              <BigLine>выделить<Arrow /></BigLine>
            </BigButton>
          </GroupBody>
          <GroupFooter><i /><span>Редактирование</span></GroupFooter>
        </Group>
        <Collapse aria-label="Свернуть ленту"><Ico w={9} h={16} s="#666" sw={1.800}><path d="M.8 14L4.500 10.500 8.200 14" /></Ico></Collapse>
      </Ribbon>

      <FormulaBar>
        <Box $w={102}>
          <input aria-label="Имя" defaultValue="" />
          <BoxEnd aria-label="Список имён"><Arrow c="#777" /></BoxEnd>
        </Box>
        <Handle><Ico w={2} h={12} s="none"><path d="M0 1h2v2H0zM0 5h2v2H0zM0 9h2v2H0z" fill="#ababab" /></Ico></Handle>
        <Box $w={110}>
          <button aria-label="Отмена"><Ico w={11} h={11} s="#c0c0c0" sw={1.800}><path d="M1 1l9 9M10 1l-9 9" /></Ico></button>
          <button aria-label="Ввод"><Ico w={13} h={11} s="#c0c0c0" sw={2}><path d="M1 6l3.500 3.500L12 1" /></Ico></button>
          <button aria-label="Вставить функцию"><Ico w={14} h={14} s="#555" sw={1.300}><path d="M8 1.500Q5.500 0 5 3.500L3.500 11Q3 13.500 1 12.500M2.500 5h5M7.500 7.500Q9 7 9.500 9.500t2.500 2.500M12.500 7.500l-5 5" /></Ico></button>
        </Box>
        <Space $w={3} />
        <Box>
          <input aria-label="Строка формул" defaultValue="75" />
          <BoxEnd aria-label="Развернуть строку формул"><Ico w={8} h={6} s="#666" sw={1.800}><path d="M1 1l3 3 3-3" /></Ico></BoxEnd>
        </Box>
      </FormulaBar>

      <SheetArea>
        <SheetView>
          <Table>
            <colgroup>
              <col width="26" />
              {COLS.map((c) => <col key={c} width="64" />)}
            </colgroup>
            <thead>
              <tr>
                <HeadCell><CornerMark><Ico w={11} h={11} s="none"><path d="M11 0v11H0z" fill="#b4b4b4" /></Ico></CornerMark></HeadCell>
                {COLS.map((c, i) => <HeadCell key={c} scope="col" $sel={i < 15}>{c}</HeadCell>)}
              </tr>
            </thead>
            <tbody>
              {Array.from({ length: 46 }, (_, i) => <SheetRow key={i} n={i + 1} />)}
            </tbody>
          </Table>
        </SheetView>
        <VScroll>
          <ScrollButton aria-label="Прокрутить вверх"><Arrow c="#666" dir="up" /></ScrollButton>
          <Track><Thumb /></Track>
          <ScrollButton aria-label="Прокрутить вниз"><Arrow c="#666" /></ScrollButton>
        </VScroll>
      </SheetArea>

      <SheetBar>
        <SheetNav>
          <button aria-label="Предыдущий лист"><Arrow c="#c0c0c0" dir="left" /></button>
          <button aria-label="Следующий лист"><Arrow c="#c0c0c0" dir="right" /></button>
        </SheetNav>
        <SheetTab $w={66} $active>Source</SheetTab>
        <SheetTab $w={102}>SourceObSm</SheetTab>
        <SheetTab $w={69}>SmtRes</SheetTab>
        <SheetTab $w={83}>EtalonRes</SheetTab>
        <AddSheet aria-label="Новый лист"><Ico w={17} h={17} s="#777"><circle cx="8.500" cy="8.500" r="7.500" /><path d="M8.500 4.500v8M4.500 8.500h8" strokeWidth="1.800" /></Ico></AddSheet>
        <HScroll>
          <HGrip><Ico w={2} h={11} s="none"><path d="M0 0h2v2H0zM0 4h2v2H0zM0 8h2v2H0z" fill="#ababab" /></Ico></HGrip>
          <ScrollButton aria-label="Прокрутить влево"><Arrow c="#666" dir="left" /></ScrollButton>
          <Track $row><Thumb $row /></Track>
          <ScrollButton aria-label="Прокрутить вправо"><Arrow c="#666" dir="right" /></ScrollButton>
        </HScroll>
      </SheetBar>

      <StatusBar>
        <span>Готово</span>
        <Ico w={13} h={14} s="#777"><path d="M3.500 4.500h9v9h-9zM6 2.500h6.500v2M2.500 6v7.500M5 7.500h6M5 9.500h6M5 11.500h6" /><circle cx="3" cy="3" r="3" fill="#777" stroke="none" /></Ico>
        <ViewButtons>
          <button aria-label="Обычный"><Ico w={13} h={13} s="#666"><Grid x={0.5} y={0.5} cols={3} rows={3} cw={4} ch={4} /></Ico></button>
          <button aria-label="Разметка страницы"><Ico w={14} h={13} s="#666"><path d="M.5.5h13v12H.5zM3.500 2.500h7v8h-7zM5 4.500h4M5 6.500h4M5 8.500h4" /></Ico></button>
          <button aria-label="Страничный режим"><Ico w={14} h={13} s="#666"><path d="M.5.5h13v12H.5zM.5 7.500h8V.5M4.500.5v7" /></Ico></button>
        </ViewButtons>
        <ZoomBox>
          <Ico w={7} h={8} s="#ababab" sw={2}><path d="M0 4h7" /></Ico>
          <ZoomRange type="range" min={0} max={100} defaultValue={50} aria-label="Масштаб" />
          <Ico w={8} h={8} s="#ababab" sw={2}><path d="M0 4h8M4 0v8" /></Ico>
          <ZoomValue>10%</ZoomValue>
        </ZoomBox>
      </StatusBar>

      <Taskbar>
        <TaskButton $gap={0} aria-label="Пуск">
          <Ico w={16} h={16} s="none"><path d="M0 2.300L6.500 1.400v6.200H0zM7.300 1.300L16 0v7.600H7.300zM0 8.400h6.500v6.200L0 13.700zM7.300 8.400H16V16l-8.700-1.300z" fill="#fff" /></Ico>
        </TaskButton>
        <TaskButton $gap={3} aria-label="Поиск">
          <Ico w={16} h={16} s="#fff" sw={1.400}><circle cx="10" cy="6" r="5.200" /><path d="M6.300 9.700L.5 15.500" /></Ico>
        </TaskButton>
        <TaskButton $split aria-label="Проводник">
          <Ico w={22} h={19} s="none"><path d="M0 1h8l2 2h11v14H0z" fill="#e8c05a" /><path d="M1 4h21v14H0V5z" fill="#fbe394" /><path d="M4 11q0-1 1-1h12q1 0 1 1v8h-4v-4H8v4H4z" fill="#35a6de" /></Ico>
        </TaskButton>
        <TaskButton aria-label="Internet Explorer">
          <Ico w={24} h={24} s="none"><path d="M20 17.500A8.200 8.200 0 1 1 20.800 13H8.500" stroke="#52c6f3" strokeWidth="4" /><path d="M2 23Q-1 20 5 12 12 3 19 1q5-1 3 5 .5-4-3-3.500Q12 5 6 13 1 20 4 22z" fill="#f6c62d" /></Ico>
        </TaskButton>
        <TaskButton aria-label="Word">
          <Ico w={22} h={22} s="none"><path d="M12 3h10v16H12z" fill="#fff" /><path d="M13 5.500h8M13 8.500h8M13 11.500h8M13 14.500h8M13 17.500h8" stroke="#2b579a" strokeWidth="1.200" /><path d="M0 2l13-2v22L0 20z" fill="#2b579a" /><path d="M2.500 7l2 8L7 8l2.200 7 2-8" stroke="#fff" strokeWidth="1.500" /></Ico>
        </TaskButton>
        <TaskButton $active aria-label="Excel">
          <Ico w={22} h={22} s="none"><path d="M12 3h10v16H12z" fill="#fff" /><path d="M13 5.500h8M13 8.500h8M13 11.500h8M13 14.500h8M13 17.500h8M17.500 4v14" stroke={GREEN} strokeWidth="1.200" /><path d="M0 2l13-2v22L0 20z" fill={GREEN} /><path d="M4 6.500l5.500 9M9.500 6.500L4 15.500" stroke="#fff" strokeWidth="2" /></Ico>
        </TaskButton>
        <TaskButton aria-label="Acrobat Reader">
          <Ico w={22} h={22} s="none"><path d="M1 1h20v20H1z" fill="#250405" stroke="#d3211c" strokeWidth="1.500" /><path d="M5 17q5-4 6-11 .5-2-.5-2t0 3q2 6 6 6.500 2-.5 0-1.500-5 0-11 4-1 1 0 1z" stroke="#fff" /></Ico>
        </TaskButton>
        <TaskButton $run aria-label="Смета">
          <Ico w={24} h={24} s="none"><path d="M.5.500h23v23H.500z" fill="#fff" stroke="#e8975a" /><path d="M4 12h16q-1 7-8 10-7-3-8-10z" fill="#4bb34a" /><path d="M5 17h14q-2 3.500-7 5-5-1.500-7-5z" fill="#3b83d0" /><circle cx="11" cy="8" r="6" fill="#f57e17" /><path d="M3 12q9 3 18-2l1 3q-8 4-18 1z" fill="#f9a12d" /><circle cx="9.500" cy="6.500" r="2.500" fill="#fba045" /></Ico>
        </TaskButton>
        <TaskButton $run aria-label="Chrome">
          <Ico w={22} h={22} s="none"><circle cx="11" cy="11" r="11" fill="#fbd13b" /><path d="M1.500 5.500A11 11 0 0 1 20.500 5.500H11L6 13z" fill="#dc4a3d" /><path d="M1.500 5.500A11 11 0 0 0 10 22l4.500-7.500H8z" fill="#2f9e58" /><circle cx="11" cy="11" r="5.200" fill="#fff" /><circle cx="11" cy="11" r="4.200" fill="#4583ee" /></Ico>
        </TaskButton>
        <TaskButton aria-label="Outlook">
          <Ico w={22} h={22} s="none"><path d="M12 6h10v11H12z" fill="#fff" /><path d="M13 9l4 4 5-6" stroke="#0072c6" strokeWidth="1.500" /><path d="M0 2l13-2v22L0 20z" fill="#0072c6" /><ellipse cx="6.500" cy="11" rx="2.800" ry="3.600" stroke="#fff" strokeWidth="2" /></Ico>
        </TaskButton>
        <TaskButton $run aria-label="Paint">
          <Ico w={24} h={24} s="none"><path d="M1 15Q0 7 9 5q9-1 11 5 1 8-6 12-4 1-4-2t-4-2-5-3z" fill="#cfe3ee" stroke="#8fb3c9" /><circle cx="6" cy="14" r="2" fill="#c33c3c" /><circle cx="7.500" cy="9.500" r="1.800" fill="#4aa04a" /><circle cx="12.500" cy="8" r="1.800" fill="#e7b740" /><circle cx="15" cy="17" r="2" fill="#3d7ac5" /><path d="M21 4l-8 18" stroke="#b87333" strokeWidth="2" /><path d="M18 1l5 0 1 3-3 3z" fill="#e0b070" /></Ico>
        </TaskButton>

        <Tray>
          <TrayButton $w={48} aria-label="Справка">
            <Ico w={22} h={22} s="none"><circle cx="11" cy="11" r="10" fill="#1493d6" stroke="#fff" strokeWidth="2" /><path d="M7.500 8.500Q8 5.500 11 5.500t3.300 2.700Q14.300 10 12.500 11T11 13.500M11 15v2.200" stroke="#fff" strokeWidth="2.200" /></Ico>
          </TrayButton>
          <TrayButton $w={42} aria-label="Люди">
            <Ico w={15} h={15} s="#f2f2f2" sw={1.300}><circle cx="10.500" cy="3.500" r="2.800" /><circle cx="4.500" cy="7.500" r="2.500" /><path d="M.7 15q.3-5 4-5t3.500 5M8.500 8q5-3 6 3" /></Ico>
          </TrayButton>
          <TrayButton $w={26} aria-label="Скрытые значки"><Ico w={12} h={7} s="#f2f2f2" sw={1.300}><path d="M.5 6.500L6 1l5.500 5.500" /></Ico></TrayButton>
          <TrayButton $w={22} aria-label="Сеть"><Ico w={16} h={14} s="#f2f2f2"><path d="M4.500 1.500h11v8h-14v-4M8.500 10v3M5 13.500h7M.5.500h4v4h-4zM2.500 4v2" /></Ico></TrayButton>
          <TrayButton $w={24} aria-label="Звук"><Ico w={15} h={12} s="#f2f2f2"><path d="M.5 4v4h2.500l3 3V1L3 4zM9.500 4l4.500 4.500M14 4L9.500 8.500" /></Ico></TrayButton>
          <TrayButton $w={36}>РУС</TrayButton>
          <Clock><span>11:03</span><span>13.08.2018</span></Clock>
          <TrayButton $w={42} aria-label="Уведомления">
            <BadgeHost>
              <Ico w={16} h={16} s="none"><path d="M0 0h16v12H8l-4 4v-4H0z" fill="#fff" /><path d="M3 3.500h10M3 6.500h10M3 9.500h7" stroke="#222" /></Ico>
              <Badge>2</Badge>
            </BadgeHost>
          </TrayButton>
          <ShowDesktop aria-label="Свернуть все окна" />
        </Tray>
      </Taskbar>

      <Dialog role="dialog" aria-labelledby="dlg-title">
        <DialogTitle id="dlg-title">Microsoft Visual Basic</DialogTitle>
        <DialogText>{"Run-time error '-2147417848 (80010108)':\n\nAutomation error\nВызванный объект был отключен от клиентов."}</DialogText>
        <DialogButtons>
          <DialogButton disabled>Continue</DialogButton>
          <DialogButton>End</DialogButton>
          <DialogButton $primary>Debug</DialogButton>
          <DialogButton>Help</DialogButton>
        </DialogButtons>
      </Dialog>
    </Window>
  );
}
